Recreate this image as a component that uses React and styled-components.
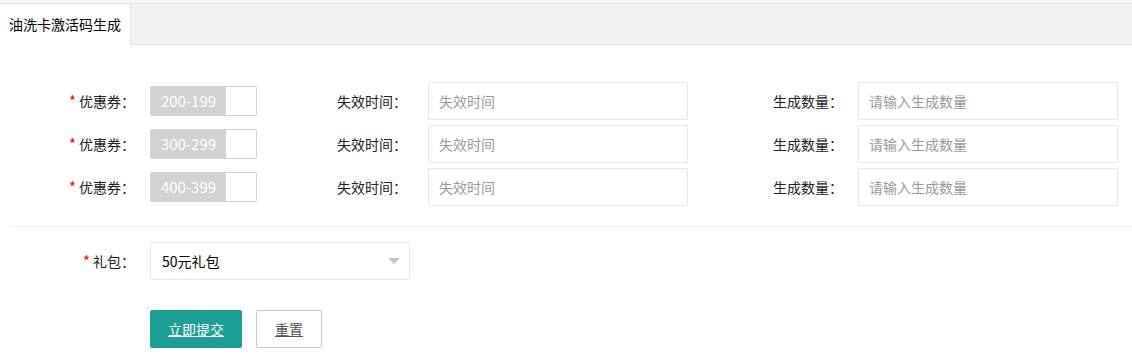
import React from "react";
import styled, { createGlobalStyle } from "styled-components";

const GlobalStyle = createGlobalStyle`
  html, body { margin: 0; padding: 0; background: #fff; }
  body {
    font-family: "Noto Sans CJK SC", "Noto Sans", sans-serif;
    font-size: 14px;
    color: #333;
  }
  * { box-sizing: border-box; }
`;

const Page = styled.div`
  width: 1132px;
  border-top: 3px solid #f7f7f7;
`;

const TabHeader = styled.div`
  display: flex;
  height: 42px;
  background: #f2f2f2;
  border-top: 1px solid #e2e2e2;
  border-bottom: 1px solid #e2e2e2;
`;

const Tab = styled.div`
  height: 41px;
  margin-bottom: -1px;
  width: 131px;
  background: #fff;
  border-right: 1px solid #e2e2e2;
  color: #000;
  font-size: 14px;
  line-height: 40px;
  padding-left: 9px;
  white-space: nowrap;
`;

const Form = styled.div`
  padding: 37px 0 0 10px;
`;

const RowGroup = styled.div`
  display: grid;
  row-gap: 5px;
`;

const Row = styled.div`
  display: flex;
  align-items: center;
  height: 38px;
`;

const Label = styled.label`
  flex-shrink: 0;
  width: ${(p) => p.$w}px;
  padding-right: ${(p) => p.$pr || 15}px;
  text-align: right;
  font-size: 14px;
  color: #222;
  line-height: 20px;
  white-space: nowrap;
`;

const Req = styled.span`
  color: #f00;
  font-size: 15px;
  margin-right: 3px;
`;

const CouponWrap = styled.div`
  width: 138px;
  flex-shrink: 0;
  display: flex;
  align-items: center;
`;

const Checkbox = styled.div`
  display: flex;
  height: 30px;
  border: 1px solid #d2d2d2;
  border-radius: 2px;
  overflow: hidden;
`;

const CheckText = styled.span`
  width: 75px;
  background: #d2d2d2;
  color: #fff;
  font-size: 15px;
  line-height: 28px;
  text-align: center;
`;

const CheckIcon = styled.i`
  width: 30px;
  background: #fff;
`;

const Input = styled.input`
  width: ${(p) => p.$w || 260}px;
  height: 38px;
  flex-shrink: 0;
  border: 1px solid #e6e6e6;
  border-radius: 2px;
  padding: 0 10px;
  font-family: inherit;
  font-size: 14px;
  color: #333;
  background: #fff;
  outline: none;
  &::placeholder { color: #999; }
`;

const Divider = styled.div`
  height: 1px;
  background: #f2f2f2;
  margin: 20px 0 15px;
`;

const Select = styled.div`
  position: relative;
  width: 260px;
  height: 38px;
  border: 1px solid #e6e6e6;
  border-radius: 2px;
  padding-left: 11px;
  line-height: 36px;
  font-size: 14px;
  color: #000;
`;

const Arrow = styled.span`
  position: absolute;
  right: 9px;
  top: 50%;
  margin-top: -3px;
  width: 0;
  height: 0;
  border-style: solid;
  border-width: 6px 6px 0 6px;
  border-color: #c2c2c2 transparent transparent transparent;
`;

const ButtonRow = styled.div`
  display: flex;
  gap: 14px;
  margin-top: 30px;
  padding-left: 140px;
`;

const Button = styled.button`
  height: 38px;
  padding: 0 18px;
  border-radius: 2px;
  font-family: inherit;
  font-size: 14px;
  text-decoration: underline;
  cursor: pointer;
  border: ${(p) => (p.$primary ? "none" : "1px solid #c9c9c9")};
  background: ${(p) => (p.$primary ? "#1aa094" : "#fff")};
  color: ${(p) => (p.$primary ? "#fff" : "#555")};
`;

const coupons = ["200-199", "300-299", "400-399"];

export default function App() {
  return (
    <Page>
      <GlobalStyle />
      <TabHeader>
        <Tab>油洗卡激活码生成</Tab>
      </TabHeader>
      <Form>
        <RowGroup>
          {coupons.map((c) => (
            <Row key={c}>
              <Label $w={140}>
                <Req>*</Req>优惠券：
              </Label>
              <CouponWrap>
                <Checkbox>
                  <CheckText>{c}</CheckText>
                  <CheckIcon />
                </Checkbox>
              </CouponWrap>
              <Label $w={140} $pr={21}>失效时间：</Label>
              <Input placeholder="失效时间" />
              <Label $w={170}>生成数量：</Label>
              <Input placeholder="请输入生成数量" />
            </Row>
          ))}
        </RowGroup>
        <Divider />
        <Row>
          <Label $w={140}>
            <Req>*</Req>礼包：
          </Label>
          <Select>
            50元礼包
            <Arrow />
          </Select>
        </Row>
        <ButtonRow>
          <Button $primary>立即提交</Button>
          <Button>重置</Button>
        </ButtonRow>
      </Form>
    </Page>
  );
}
